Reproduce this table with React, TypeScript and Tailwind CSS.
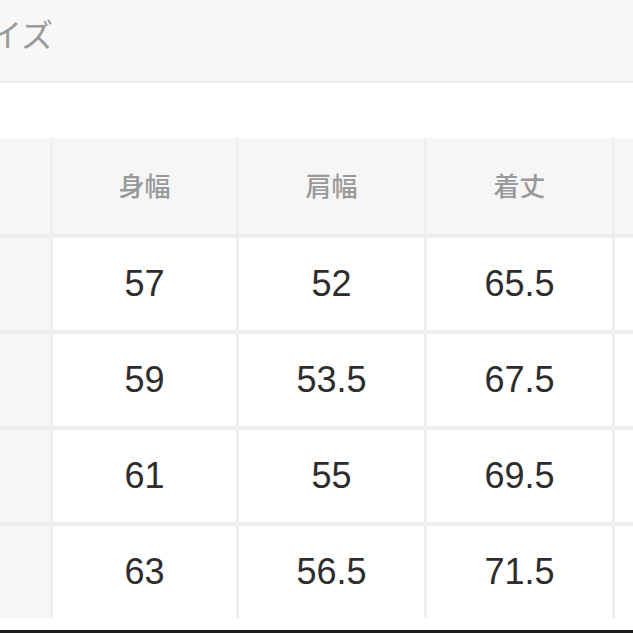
import React from "react";

const headers = ["", "身幅", "肩幅", "着丈", ""];
const rows = [
  ["57", "52", "65.5"],
  ["59", "53.5", "67.5"],
  ["61", "55", "69.5"],
  ["63", "56.5", "71.5"],
];

export default function App() {
  return (
    <div
      className="w-[633px] h-[633px] overflow-hidden bg-white flex flex-col"
      style={{ fontFamily: '"Liberation Sans", "Noto Sans CJK JP", sans-serif' }}
    >
      <div className="h-[83px] shrink-0 bg-[#f7f7f7] border-b-2 border-[#ebebeb] flex items-center">
        <span className="ml-[-42px] text-[32px] leading-none text-[#9a9a9a] pb-[9px]">サイズ</span>
      </div>
      <div className="h-[55px] shrink-0 bg-white" />
      <div className="grid grid-cols-[50px_183px_185px_185px_1fr] grid-rows-[96px_92px_92px_92px_92px] gap-x-[3px] gap-y-[4px] bg-[#efefef] shrink-0">
        {headers.map((h, i) => (
          <div
            key={"h" + i}
            className="bg-[#f6f6f6] flex items-center justify-center text-[26px] font-medium text-[#999999] pt-[3px]"
          >
            {h}
          </div>
        ))}
        {rows.map((r, ri) => (
          <React.Fragment key={ri}>
            <div className="bg-[#f6f6f6]" />
            {r.map((v, ci) => (
              <div
                key={ci}
                className="bg-white flex items-center justify-center text-[36px] text-[#2d2d2d]"
              >
                {v}
              </div>
            ))}
            <div className="bg-white" />
          </React.Fragment>
        ))}
      </div>
      <div className="flex-1 bg-white" />
      <div className="h-[3px] shrink-0 bg-[#1c1c1c]" />
    </div>
  );
}
